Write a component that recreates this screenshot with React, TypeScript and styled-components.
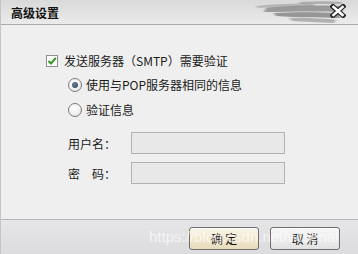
import React, { useState } from 'react';
import { styled, createGlobalStyle } from 'styled-components';

const GlobalStyle = createGlobalStyle`
    html, body { margin: 0; padding: 0; width: 358px; height: 254px; overflow: hidden; background: #efefef; }
    body { font-family: "Noto Sans CJK SC", "Liberation Sans", sans-serif; font-size: 12px; color: #1a1a1a; }
    * { box-sizing: border-box; }
`;

const CloseIcon: React.FC = () => (
    <svg width="16" height="14" viewBox="0 0 16 14">
        <path d="M3 2.5 L13 11.5 M13 2.5 L3 11.5" stroke="#262626" strokeWidth="5" strokeLinecap="square" />
        <path d="M3.5 3 L12.5 11 M12.5 3 L3.5 11" stroke="#ffffff" strokeWidth="2.6" strokeLinecap="square" />
    </svg>
);

const BrushTexture: React.FC = () => (
    <svg width="90" height="24" viewBox="0 0 90 24" preserveAspectRatio="none">
        <defs>
            <filter id="blur" x="-20%" y="-50%" width="140%" height="200%">
                <feGaussianBlur stdDeviation="1.8 0.6" />
            </filter>
        </defs>
        <g filter="url(#blur)" fill="#6c6c6c">
            <path d="M12 8 C30 6 55 5 88 6 L88 12 C60 11 35 12 10 12 Z" opacity="0.6" />
            <path d="M20 13 C40 12 62 12 86 13 L86 18 C62 17 44 18 22 16 Z" opacity="0.65" />
            <path d="M35 18 C50 18 70 18 82 20 L80 23 C64 22 50 22 38 21 Z" opacity="0.45" />
            <path d="M2 6 C20 4 40 3 60 4 L60 6 C40 6 22 7 4 8 Z" opacity="0.35" />
            <path d="M45 2 C60 1 75 1 88 2 L88 4 C72 4 58 4 46 4 Z" opacity="0.4" />
        </g>
    </svg>
);

const CheckMark: React.FC = () => (
    <svg width="10" height="10" viewBox="0 0 10 10">
        <path d="M1.5 5 L4 7.5 L8.8 1.8" fill="none" stroke="#2e9a1e" strokeWidth="2" />
    </svg>
);

const App: React.FC = () => {
    const [needAuth, setNeedAuth] = useState(true);
    const [mode, setMode] = useState<'same' | 'custom'>('same');

    return (
        <>
            <GlobalStyle />
            <Window>
                <TitleBar>
                    <Title>高级设置</Title>
                    <Brush><BrushTexture /></Brush>
                    <CloseButton aria-label="关闭"><CloseIcon /></CloseButton>
                </TitleBar>

                <Body>
                    <CheckRow onClick={() => setNeedAuth(!needAuth)}>
                        <CheckBox>{needAuth && <CheckMark />}</CheckBox>
                        <span>发送服务器（SMTP）需要验证</span>
                    </CheckRow>

                    <RadioRow $top={10} onClick={() => setMode('same')}>
                        <Radio $checked={mode === 'same'} />
                        <span>使用与POP服务器相同的信息</span>
                    </RadioRow>
                    <RadioRow $top={11} onClick={() => setMode('custom')}>
                        <Radio $checked={mode === 'custom'} />
                        <span>验证信息</span>
                    </RadioRow>

                    <FieldRow $top={15}>
                        <FieldLabel>用户名：</FieldLabel>
                        <Input disabled={mode === 'same'} />
                    </FieldRow>
                    <FieldRow $top={8}>
                        <FieldLabel>密　码：</FieldLabel>
                        <Input type="password" disabled={mode === 'same'} />
                    </FieldRow>
                </Body>

                <Footer>
                    <Button $primary>确 定</Button>
                    <Button>取 消</Button>
                    <Watermark>https://blog.csdn.net/wfserial</Watermark>
                </Footer>
            </Window>
        </>
    );
};

// --- STYLED COMPONENTS ---
const Window = styled.div`
    width: 358px; height: 254px; display: flex; flex-direction: column;
    background: #efefef; border-left: 1px solid #c4c4c4;
`;

const TitleBar = styled.div`
    height: 25px; flex-shrink: 0; position: relative; display: flex; align-items: center;
    padding-left: 10px;
    background: linear-gradient(to bottom, #d9d9d9 0%, #e3e3e3 55%, #ebebeb 100%);
    border-bottom: 1px solid #a9a9a9;
`;

const Title = styled.div`
    font-size: 12px; font-weight: 700; color: #111; margin-top: 1px;
`;

const Brush = styled.div`
    position: absolute; right: 14px; top: 0; width: 90px; height: 24px; display: flex;
`;

const CloseButton = styled.button`
    position: absolute; right: 12px; top: 4px; width: 16px; height: 14px; padding: 0;
    border: none; background: none; cursor: pointer; display: flex;
`;

const Body = styled.div`
    flex: 1; display: flex; flex-direction: column; padding: 29px 0 0 45px;
    background: #efefef;
`;

const CheckRow = styled.label`
    display: flex; align-items: center; gap: 6px; height: 14px; cursor: pointer; line-height: 14px;
`;

const CheckBox = styled.span`
    width: 12px; height: 12px; border: 1px solid #8d8d8d; background: #fdfdfd;
    display: flex; align-items: center; justify-content: center; flex-shrink: 0;
`;

const RadioRow = styled.label<{ $top: number }>`
    display: flex; align-items: center; gap: 4px; height: 14px; margin: ${({ $top }) => $top}px 0 0 22px;
    cursor: pointer; line-height: 14px;
`;

const Radio = styled.span<{ $checked: boolean }>`
    width: 14px; height: 14px; border-radius: 50%; border: 1px solid #7a7a7a; flex-shrink: 0;
    background: radial-gradient(circle at 40% 35%, #ffffff 0%, #f0f0f0 55%, #d4d4d4 100%);
    display: flex; align-items: center; justify-content: center;
    &::after {
        content: ''; width: 6px; height: 6px; border-radius: 50%;
        background: ${({ $checked }) => ($checked ? 'radial-gradient(circle at 40% 35%, #6a7ea0, #2c3a55)' : 'transparent')};
    }
`;

const FieldRow = styled.div<{ $top: number }>`
    display: flex; align-items: center; height: 22px; margin: ${({ $top }) => $top}px 0 0 22px;
`;

const FieldLabel = styled.span`
    width: 63px; flex-shrink: 0; white-space: nowrap;
`;

const Input = styled.input`
    width: 154px; height: 22px; border: 1px solid #b2b2b2; background: #e8e8e8;
    padding: 0 4px; font-family: inherit; font-size: 12px; outline: none;
`;

const Footer = styled.div`
    height: 35px; flex-shrink: 0; position: relative; display: flex; justify-content: flex-end;
    align-items: flex-start; gap: 11px; padding: 7px 18px 0 0;
    border-top: 1px solid #b6b6ba;
    background: linear-gradient(to bottom, #e6e6e8 0%, #dcdcde 100%);
`;

const Button = styled.button<{ $primary?: boolean }>`
    width: 70px; height: 23px; border-radius: 3px; border: 1px solid #6e6e6e;
    font-family: inherit; font-size: 12px; color: #111; cursor: pointer; padding: 0;
    background: ${({ $primary }) =>
        $primary
            ? 'linear-gradient(to bottom, #fbf6e8 0%, #f1e7cd 55%, #e8dcbd 100%)'
            : 'linear-gradient(to bottom, #f7f7f7 0%, #ececec 55%, #e2e2e2 100%)'};
    box-shadow: inset 0 1px 0 #ffffff;
`;

const Watermark = styled.span`
    position: absolute; left: 148px; top: 8px; pointer-events: none;
    font-family: "Liberation Sans", Arial, sans-serif; font-size: 15px;
    color: rgba(255, 255, 255, 0.65); white-space: nowrap;
`;

export default App;
